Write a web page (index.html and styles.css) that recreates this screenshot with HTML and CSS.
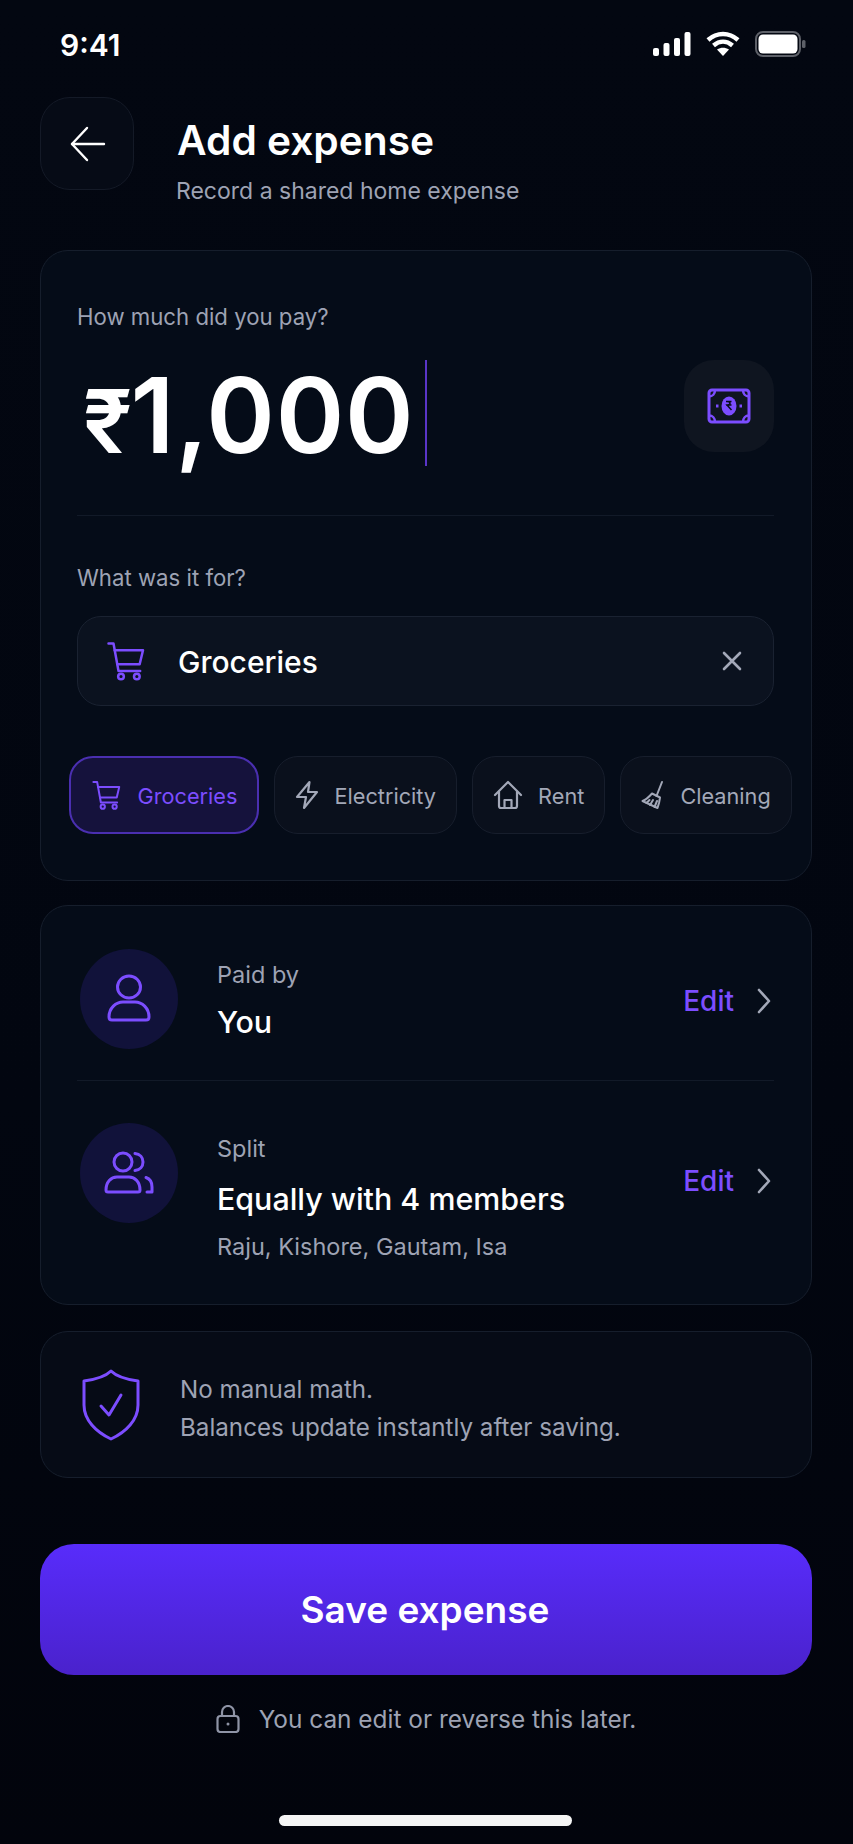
FILE: index.html
```html
<!DOCTYPE html>
<html lang="en">
<head>
  <meta charset="UTF-8">
  <meta name="viewport" content="width=device-width, initial-scale=1.0">
  <title>Add expense</title>
  <link rel="stylesheet" href="styles.css">
</head>
<body>
  <div class="screen">
    <div class="status">
      <span class="time">9:41</span>
      <div class="status-icons">
        <svg width="38" height="26" viewBox="0 0 38 26"><rect x="0" y="17" width="6" height="8" rx="2" fill="#fff"/><rect x="10.500" y="12" width="6" height="13" rx="2" fill="#fff"/><rect x="21" y="7" width="6" height="18" rx="2" fill="#fff"/><rect x="31.500" y="1" width="6" height="24" rx="2" fill="#fff"/></svg>
        <svg width="34" height="26" viewBox="0 0 34 26" fill="none" stroke="#fff" stroke-width="4.500"><path d="M2 9c9-8 21-8 30 0"/><path d="M7.500 14.500c6-5 13-5 19 0"/><path d="M17 25l-6-6.500c4-2.500 8-2.500 12 0z" fill="#fff" stroke="none"/></svg>
        <svg width="51" height="26" viewBox="0 0 51 26"><rect x="1" y="1" width="44" height="24" rx="7" fill="none" stroke="#5d6068" stroke-width="2"/><rect x="3.500" y="3.500" width="39" height="19" rx="4.500" fill="#fff"/><rect x="47" y="9" width="3.500" height="8" rx="1.500" fill="#5d6068"/></svg>
      </div>
    </div>

    <div class="header">
      <button class="back">
        <svg width="36" height="36" viewBox="0 0 36 36" fill="none" stroke="#fff" stroke-width="2.400" stroke-linecap="round" stroke-linejoin="round"><path d="M34 18H2"/><path d="M17 2 2 18l15 16"/></svg>
      </button>
      <div class="title-block">
        <h1>Add expense</h1>
        <p class="subtitle">Record a shared home expense</p>
      </div>
    </div>

    <section class="card amount-card">
      <div class="label first-label">How much did you pay?</div>
      <div class="amount-row">
        <div class="amount"><span class="rupee">₹</span>1,000</div>
        <div class="caret"></div>
        <div class="money-box">
          <svg width="44" height="36" viewBox="0 0 44 36" fill="none" stroke="#7c4dff" stroke-width="3" stroke-linejoin="round"><rect x="2" y="2" width="40" height="32" rx="3"/><path d="M2 8.500c3.500 0 6-2.500 6-6.500M36 2c0 4 2.500 6.500 6 6.500M42 27.500c-3.500 0-6 2.500-6 6.500M8 34c0-4-2.500-6.500-6-6.500" stroke-width="2.500"/><ellipse cx="22" cy="18" rx="7.500" ry="9.500" fill="#7c4dff" stroke="none"/><path d="M19 13.500h5.500M19 17h5.500M20 13.500c4 0 4 3.500 0 3.500l4.500 5" stroke="#060c18" stroke-width="1.500" stroke-linejoin="miter"/><path d="M9 18h2.500M32.500 18H35"/></svg>
        </div>
      </div>
      <div class="divider"></div>
      <div class="label second-label">What was it for?</div>
      <div class="field">
        <svg class="field-cart" width="42" height="40" viewBox="0 0 24 24" fill="none" stroke="#7c4dff" stroke-width="1.500" stroke-linecap="round" stroke-linejoin="round"><path d="M1.500 1.500h3l3 16.500h13"/><path d="M5.200 5.500h17l-2 8.500H6.800"/><circle cx="9" cy="21.300" r="1.700"/><circle cx="18.500" cy="21.300" r="1.700"/></svg>
        <span class="field-text">Groceries</span>
        <svg width="22" height="22" viewBox="0 0 22 22" fill="none" stroke="#a3a8b8" stroke-width="2.600" stroke-linecap="round"><path d="M3 3l16 16M19 3 3 19"/></svg>
      </div>
      <div class="chips">
        <div class="chip chip-active">
          <svg width="31" height="30" viewBox="0 0 24 24" fill="none" stroke="#7c4dff" stroke-width="1.600" stroke-linecap="round" stroke-linejoin="round"><path d="M1.500 1.500h3l3 16.500h13"/><path d="M5.200 5.500h17l-2 8.500H6.800"/><circle cx="9" cy="21.300" r="1.700"/><circle cx="18.500" cy="21.300" r="1.700"/></svg>
          <span>Groceries</span>
        </div>
        <div class="chip">
          <svg width="24" height="30" viewBox="0 0 24 30" fill="none" stroke="#a3a8b8" stroke-width="2.200" stroke-linejoin="round"><path d="M14.500 2 2 17h9l-2 11 13-16h-9z"/></svg>
          <span>Electricity</span>
        </div>
        <div class="chip">
          <svg width="30" height="30" viewBox="0 0 30 30" fill="none" stroke="#a3a8b8" stroke-width="2.200" stroke-linecap="round" stroke-linejoin="round"><path d="M2 15 15 2l13 13"/><path d="M6 11.500V26a2 2 0 0 0 2 2h14a2 2 0 0 0 2-2V11.500"/><path d="M11.500 28v-8h7v8"/></svg>
          <span>Rent</span>
        </div>
        <div class="chip">
          <svg width="24" height="30" viewBox="0 0 24 30" fill="none" stroke="#a3a8b8" stroke-width="2" stroke-linecap="round" stroke-linejoin="round"><path d="M21 2l-5.500 14"/><path d="M11 13.500l8 4-1 5.500-1.500 5-15-7c3-1 6-3.500 9.500-7.500z"/><path d="M9 25l3-5M13.500 27l2.500-6M5.500 23l3-3"/></svg>
          <span>Cleaning</span>
        </div>
      </div>
    </section>

    <section class="card people-card">
      <div class="row row-paid">
        <div class="avatar">
          <svg width="44" height="50" viewBox="0 0 44 50" fill="none" stroke="#7c4dff" stroke-width="3" stroke-linejoin="round"><ellipse cx="22" cy="13" rx="11.500" ry="11"/><path d="M2 43c0-9 7-15 14-15h12c7 0 14 6 14 15 0 2-1 3-3 3H5c-2 0-3-1-3-3z"/></svg>
        </div>
        <div class="row-text">
          <div class="small">Paid by</div>
          <div class="strong">You</div>
        </div>
        <div class="edit"><span>Edit</span>
          <svg width="16" height="26" viewBox="0 0 16 26" fill="none" stroke="#a3a8b8" stroke-width="2.600" stroke-linecap="round" stroke-linejoin="round"><path d="M3 2l10 11L3 24"/></svg>
        </div>
      </div>
      <div class="divider"></div>
      <div class="row row-split">
        <div class="avatar">
          <svg width="50" height="44" viewBox="0 0 50 44" fill="none" stroke="#7c4dff" stroke-width="3" stroke-linecap="round" stroke-linejoin="round"><circle cx="19" cy="11" r="9"/><path d="M2 39c0-8 5-13 11-13h12c6 0 11 5 11 13 0 1.500-1 2-2 2H4c-1 0-2-.5-2-2z"/><path d="M31 2.500c5 .5 8 4 8 8.500s-3 8-8 8.500"/><path d="M42 26.500c3 1 6 4 6 9.500v5h-5"/></svg>
        </div>
        <div class="row-text">
          <div class="small">Split</div>
          <div class="strong">Equally with 4 members</div>
          <div class="small names">Raju, Kishore, Gautam, Isa</div>
        </div>
        <div class="edit edit-split"><span>Edit</span>
          <svg width="16" height="26" viewBox="0 0 16 26" fill="none" stroke="#a3a8b8" stroke-width="2.600" stroke-linecap="round" stroke-linejoin="round"><path d="M3 2l10 11L3 24"/></svg>
        </div>
      </div>
    </section>

    <section class="card note-card">
      <svg class="shield" width="58" height="72" viewBox="0 0 58 72" fill="none" stroke="#7c4dff" stroke-width="3" stroke-linecap="round" stroke-linejoin="round"><path d="M29 2c5 5 12 8 27 10v24c0 15-12 27-27 34C14 63 2 51 2 36V12c15-2 22-5 27-10z"/><path d="M19 37l8 9 12-20"/></svg>
      <div class="note-text">
        <div>No manual math.</div>
        <div>Balances update instantly after saving.</div>
      </div>
    </section>

    <button class="save">Save expense</button>

    <div class="footnote">
      <svg width="24" height="28" viewBox="0 0 24 28" fill="none" stroke="#8f94a6" stroke-width="2.200" stroke-linejoin="round"><rect x="1.500" y="11" width="21" height="16" rx="3"/><path d="M6 11V7a6 6 0 0 1 12 0v4"/><circle cx="12" cy="19" r="1.500" fill="#8f94a6" stroke="none"/></svg>
      <span>You can edit or reverse this later.</span>
    </div>

    <div class="home-bar"></div>
  </div>
</body>
</html>
```

FILE: styles.css
```css
* {
  box-sizing: border-box;
}
body {
  margin: 0;
  background-color: #020610;
  font-family: Inter, "Noto Sans", sans-serif;
}
.screen {
  width: 853px;
  height: 1844px;
  padding: 0 41px 0 40px;
  overflow: hidden;
  display: flex;
  flex-direction: column;
  background: linear-gradient(to bottom, #030711, #020610 60%, #02040c);
}

/* status bar */
.status {
  height: 97px;
  padding: 27px 6px 0 20px;
  display: flex;
  justify-content: space-between;
  align-items: flex-start;
}
.time {
  color: #fff;
  font-size: 30px;
  line-height: 36px;
  font-weight: 600;
}
.status-icons {
  display: flex;
  gap: 15px;
  padding-top: 4px;
}

/* header */
.header {
  display: flex;
  gap: 43px;
  height: 153px;
}
.back {
  width: 94px;
  height: 93px;
  border-radius: 30px;
  border: 1px solid #141a27;
  background-color: #060b16;
  display: flex;
  align-items: center;
  justify-content: center;
  padding: 0 0 0 2px;
}
.title-block {
  padding-top: 21px;
}
h1 {
  margin: 0;
  color: #fff;
  font-size: 40.700px;
  line-height: 46px;
  font-weight: 600;
}
.subtitle {
  margin: 13px 0 0 -1px;
  color: #9ea3b4;
  font-size: 23px;
  line-height: 28px;
}

/* cards */
.card {
  border: 1px solid #161e2c;
  border-radius: 28px;
  background-color: #050c18;
}
.label {
  color: #9ea3b4;
  font-size: 22.200px;
  line-height: 30px;
}
.divider {
  height: 1px;
  background-color: #121a28;
}
.amount-card {
  height: 631px;
  padding: 51px 37px 0 36px;
}
.amount-row {
  margin-top: 28px;
  height: 106px;
  display: flex;
}
.amount {
  color: #fff;
  font-size: 104px;
  line-height: 106px;
  font-weight: 600;
  padding: 2px 0 0 6px;
  letter-spacing: 0.800px;
}
.rupee {
  font-size: 88px;
  letter-spacing: -2px;
}
.caret {
  width: 2px;
  height: 106px;
  margin-left: 11px;
  background-color: #5a35c8;
}
.money-box {
  margin-left: auto;
  width: 90px;
  height: 92px;
  border-radius: 30px;
  background-color: #0f1520;
  display: flex;
  align-items: center;
  justify-content: center;
}
.amount-row + .divider {
  margin-top: 49px;
}
.second-label {
  margin-top: 47px;
}
.field {
  margin-top: 23px;
  height: 90px;
  border: 1px solid #1a2231;
  border-radius: 24px;
  background-color: #0b121f;
  display: flex;
  align-items: center;
  padding: 0 30px 0 27px;
}
.field-text {
  margin-left: 31px;
  padding-top: 2px;
  color: #fff;
  font-size: 30px;
  font-weight: 500;
}
.field svg:last-child {
  margin-left: auto;
}
.chips {
  margin: 50px -17px 0 -8px;
  display: flex;
  gap: 14.600px;
}
.chip {
  height: 78px;
  flex: none;
  padding: 0 20px;
  border: 1px solid #171e2c;
  border-radius: 24px;
  background-color: #0a101c;
  display: flex;
  align-items: center;
  gap: 15.500px;
  color: #a3a8b8;
  font-size: 21.700px;
}
.chip span {
  padding-top: 1px;
}
.chip-active {
  background-color: #15123c;
  border: 2px solid #4a2fb0;
  color: #7c4dff;
}

/* paid by / split */
.people-card {
  margin-top: 24px;
  height: 400px;
  padding: 0 37px 0 36px;
}
.row {
  display: flex;
  align-items: flex-start;
}
.row-paid {
  height: 174px;
  padding-top: 43px;
}
.row-split {
  padding-top: 42px;
}
.avatar {
  width: 98px;
  height: 100px;
  margin-left: 3px;
  border-radius: 50%;
  background-color: #11123a;
  display: flex;
  align-items: center;
  justify-content: center;
  flex: none;
}
.row-text {
  margin-top: 11px;
  margin-left: 39px;
}
.small {
  color: #9ea3b4;
  font-size: 23.500px;
  line-height: 30px;
}
.strong {
  color: #fff;
  font-size: 30.400px;
  line-height: 38px;
  font-weight: 500;
  margin-top: 13px;
}
.row-split .strong {
  margin-top: 16px;
}
.names {
  margin-top: 14px;
}
.edit {
  margin-left: auto;
  margin-top: 34px;
  display: flex;
  align-items: center;
  gap: 22px;
  padding-right: 2px;
  color: #7c4dff;
  font-size: 28px;
  line-height: 36px;
  font-weight: 500;
}
.edit-split {
  margin-top: 40px;
}

/* note */
.note-card {
  margin-top: 26px;
  height: 147px;
  padding: 0 0 0 41px;
  display: flex;
  align-items: center;
  gap: 40px;
  background-color: #060b16;
}
.shield {
  margin-top: 1px;
}
.note-text {
  padding-top: 9px;
  color: #9ea3b4;
  font-size: 24.200px;
  line-height: 38px;
}

/* bottom */
.save {
  margin-top: 66px;
  height: 131px;
  flex: none;
  border: none;
  border-radius: 34px;
  padding: 0 2px 0 0;
  background: linear-gradient(to bottom, #582cfb, #4a22cc);
  color: #fff;
  font-family: inherit;
  font-size: 37px;
  font-weight: 600;
}
.footnote {
  margin-top: 29px;
  display: flex;
  align-items: center;
  justify-content: center;
  gap: 19px;
  color: #9ea3b4;
  font-size: 24.400px;
  height: 30px;
}
.home-bar {
  margin: 81px 240px 0 239px;
  height: 11px;
  border-radius: 6px;
  background-color: #f5f5f5;
  flex: none;
}
```
